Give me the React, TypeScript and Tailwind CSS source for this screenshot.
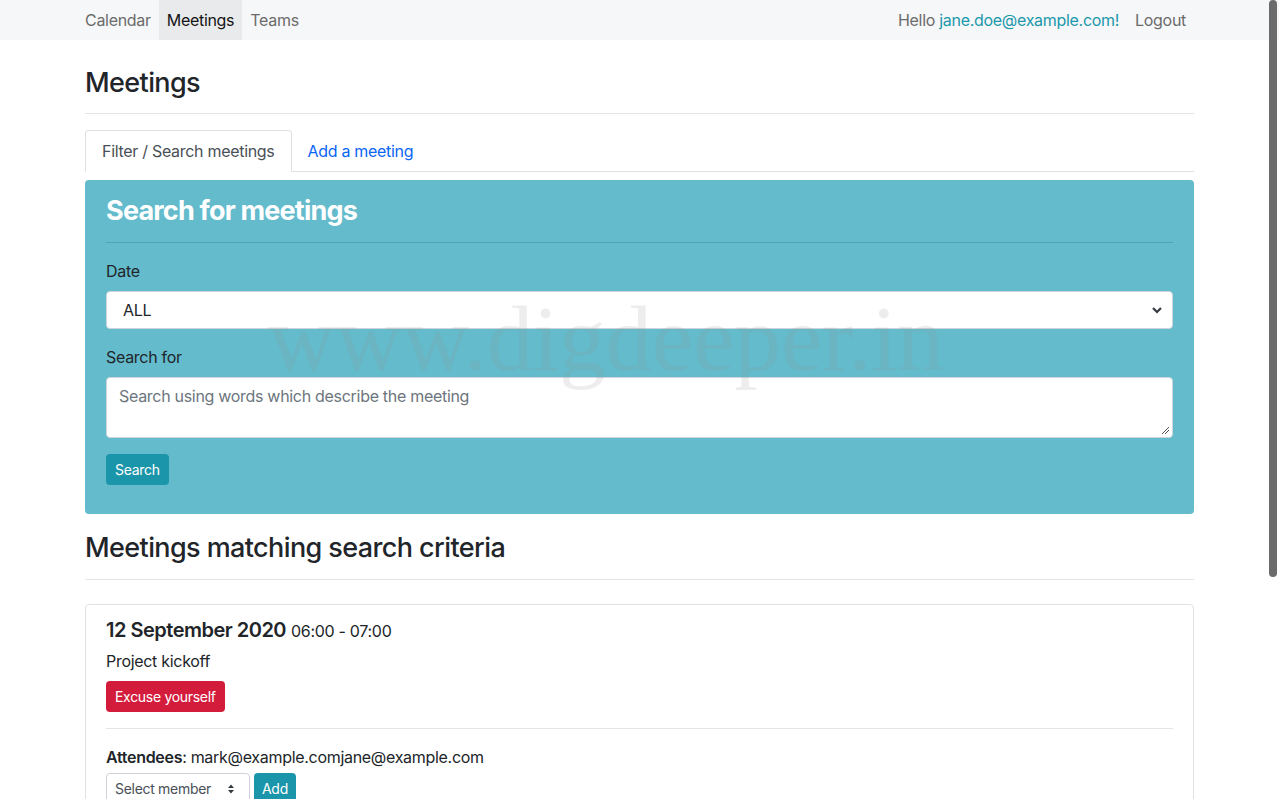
import React from "react";

export default function App() {
  return (
    <div
      className="relative h-[799px] w-full overflow-hidden bg-white tracking-[-0.3px] text-[#212529]"
      style={{ fontFamily: "Inter, 'Liberation Sans', sans-serif" }}
    >
      {/* Navbar */}
      <nav className="h-10 bg-[#f6f7f8]">
        <div className="mx-auto flex h-10 w-[1109px] items-stretch justify-between text-base">
          <div className="-ml-2 flex items-stretch">
            <a className="flex items-center px-2 text-[#6b6b6b]">Calendar</a>
            <a className="flex items-center bg-[#e9eaeb] px-2 text-[#141414]">Meetings</a>
            <a className="flex items-center px-2 text-[#6b6b6b]">Teams</a>
          </div>
          <div className="flex items-stretch">
            <span className="flex items-center px-2 text-[#6b6b6b]">
              Hello&nbsp;<span className="text-[#1b98ac]">jane.doe@example.com!</span>
            </span>
            <a className="flex items-center px-2 text-[#6b6b6b]">Logout</a>
          </div>
        </div>
      </nav>

      <main className="mx-auto w-[1109px]">
        <h1 className="mt-[26px] text-[27px] font-medium leading-[34px] tracking-[-0.6px]">Meetings</h1>
        <div className="mt-[13px] h-px bg-[#e3e4e6]" />

        {/* Tabs */}
        <div className="mt-4 flex border-b border-[#dee2e6]">
          <div className="-mb-px flex h-[42px] items-center rounded-t border border-[#dee2e6] border-b-white bg-white px-4 text-[#495057]">
            Filter / Search meetings
          </div>
          <div className="flex h-[41px] items-center px-4 text-[#0a66f5]">Add a meeting</div>
        </div>

        {/* Search box */}
        <div className="mt-2 rounded bg-[#63bbcc] px-[21px] pb-[29px] pt-[14px]">
          <h2 className="text-[27px] font-bold leading-[34px] tracking-[-0.8px] text-white">Search for meetings</h2>
          <div className="mt-[14px] h-px bg-[#4fa3b3]" />
          <div className="mt-4 text-base leading-6">Date</div>
          <div className="mt-2 flex h-[38px] items-center justify-between rounded border border-[#ced4da] bg-white pl-4 pr-2 text-[#212529]">
            <span>ALL</span>
            <svg width="12" height="12" viewBox="0 0 12 12" className="mr-[1px]">
              <path d="M2 4 L6 8 L10 4" stroke="#343a40" strokeWidth="2.2" fill="none" />
            </svg>
          </div>
          <div className="mt-4 text-base leading-6">Search for</div>
          <div className="relative mt-2 h-[61px] rounded border border-[#ced4da] bg-white px-3 pt-[6px] text-[#6c757d]">
            Search using words which describe the meeting
            <svg width="9" height="9" viewBox="0 0 9 9" className="absolute bottom-[2px] right-[2px]">
              <path d="M1 8 L8 1 M4 8 L8 4" stroke="#555" strokeWidth="1" />
            </svg>
          </div>
          <button className="mt-4 h-[31px] rounded bg-[#1a95aa] px-[9px] text-sm text-white">Search</button>
        </div>

        <h2 className="mt-[17px] text-[27px] font-medium leading-[34px] tracking-[-0.6px]">Meetings matching search criteria</h2>
        <div className="mt-[14px] h-px bg-[#e3e4e6]" />

        {/* Meeting card */}
        <div className="mt-6 rounded border border-[#dfe1e3] px-5 pt-[11px] pb-6">
          <div className="flex items-baseline gap-[5px]">
            <span className="text-[20px] font-semibold leading-[28px] tracking-[-0.5px]">12 September 2020</span>
            <span className="text-base">06:00 - 07:00</span>
          </div>
          <div className="mt-[5px] text-base leading-6">Project kickoff</div>
          <button className="mt-2 h-[31px] rounded bg-[#d31c3b] px-[9px] text-sm text-white">Excuse yourself</button>
          <div className="mt-4 h-px bg-[#e3e4e6]" />
          <div className="mt-4 text-base leading-6">
            <b className="font-semibold">Attendees</b>: mark@example.comjane@example.com
          </div>
          <div className="mt-[4px] flex gap-1">
            <div className="flex h-[31px] w-[144px] items-center justify-between rounded border border-[#ced4da] bg-white pl-2 pr-[14px] text-sm text-[#495057]">
              <span>Select member</span>
              <svg width="8" height="12" viewBox="0 0 8 12">
                <path d="M1 5 L4 1.5 L7 5 Z M1 7 L4 10.5 L7 7 Z" fill="#343a40" />
              </svg>
            </div>
            <button className="h-[31px] rounded bg-[#1a95aa] px-2 text-sm text-white">Add</button>
          </div>
        </div>
      </main>

      {/* Watermark overlay */}
      <div
        className="pointer-events-none absolute left-[268px] top-[292px] select-none text-[93px] leading-none tracking-normal text-[rgba(150,150,150,0.17)]"
        style={{ fontFamily: "'Liberation Serif', serif" }}
      >
        www.digdeeper.in
      </div>

      {/* Overlay scrollbar thumb */}
      <div className="absolute right-[2px] top-0 h-[577px] w-[8px] rounded-full bg-[#6b6b6b]" />
    </div>
  );
}
